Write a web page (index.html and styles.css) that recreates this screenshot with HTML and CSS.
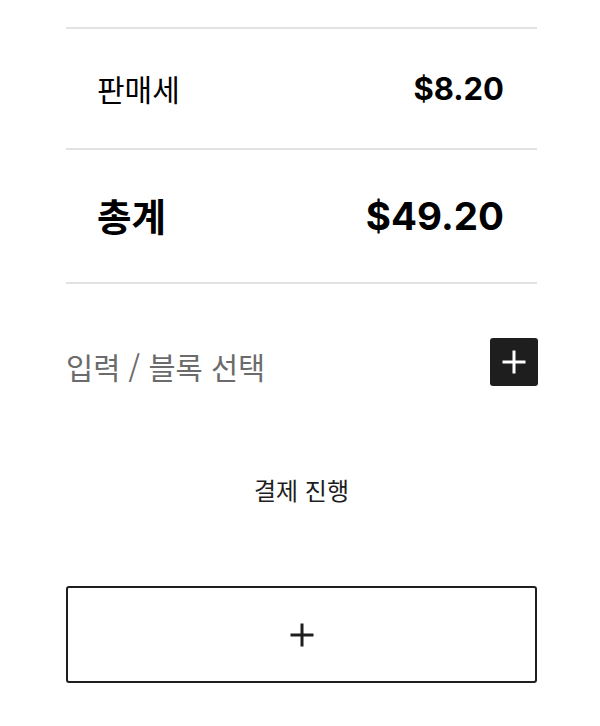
FILE: index.html
```html
<!DOCTYPE html>
<html lang="ko">
<head>
<meta charset="utf-8">
<link rel="stylesheet" href="styles.css">
</head>
<body>
<div class="wrap">
  <div class="totals">
    <div class="row row-tax">
      <span class="label">판매세</span>
      <span class="value">$8.20</span>
    </div>
    <div class="row row-total">
      <span class="label">총계</span>
      <span class="value">$49.20</span>
    </div>
  </div>
  <div class="appender">
    <span class="placeholder">입력 / 블록 선택</span>
    <button class="inserter" aria-label="블록 추가">
      <svg width="48" height="48" viewBox="0 0 48 48"><path d="M22.5 12.5h3v10h10v3h-10v10h-3v-10h-10v-3h10z" fill="#fff"/></svg>
    </button>
  </div>
  <div class="checkout">결제 진행</div>
  <button class="add-block" aria-label="블록 추가">
    <svg width="48" height="48" viewBox="0 0 48 48"><path d="M22.5 12.5h3v10h10v3h-10v10h-3v-10h-10v-3h10z" fill="#1e1e1e"/></svg>
  </button>
</div>
</body>
</html>
```

FILE: styles.css
```css
html, body {
  margin: 0;
  padding: 0;
  background: #fff;
}
body {
  font-family: "Noto Sans CJK KR", "Noto Sans", sans-serif;
  color: #000;
}
.wrap {
  width: 471px;
  margin-left: 66px;
  padding-top: 27px;
}
.totals {
  border-bottom: 2px solid #e2e2e2;
}
.row {
  display: flex;
  justify-content: space-between;
  align-items: center;
  border-top: 2px solid #e2e2e2;
  padding: 0 33px 0 31px;
}
.row-tax {
  height: 119px;
}
.row-total {
  height: 132px;
}
.label {
  font-family: "Noto Sans CJK KR", sans-serif;
}
.value {
  font-family: Inter, "Noto Sans", sans-serif;
  font-weight: 700;
}
.row-tax .label {
  font-size: 30px;
  font-weight: 400;
  margin-top: -2px;
}
.row-tax .value {
  font-size: 31px;
}
.row-total .label {
  font-size: 37.5px;
  font-weight: 700;
  margin-top: -4px;
}
.row-total .value {
  font-size: 38.5px;
}
.appender {
  display: flex;
  justify-content: space-between;
  align-items: center;
  height: 48px;
  margin-top: 54px;
  margin-right: -1px;
}
.placeholder {
  font-size: 29.5px;
  line-height: 40px;
  color: #6b6b6b;
  padding-top: 4px;
  margin-bottom: -4px;
}
.inserter {
  width: 48px;
  height: 48px;
  padding: 0;
  border: none;
  border-radius: 3px;
  background: #1e1e1e;
  display: flex;
  align-items: center;
  justify-content: center;
}
.checkout {
  text-align: center;
  font-size: 24px;
  color: #1e1e1e;
  margin-top: 86px;
}
.add-block {
  display: flex;
  align-items: center;
  justify-content: center;
  width: 471px;
  height: 97px;
  margin-top: 79px;
  padding: 0;
  background: #fff;
  border: 2px solid #1e1e1e;
  border-radius: 3px;
}
```
